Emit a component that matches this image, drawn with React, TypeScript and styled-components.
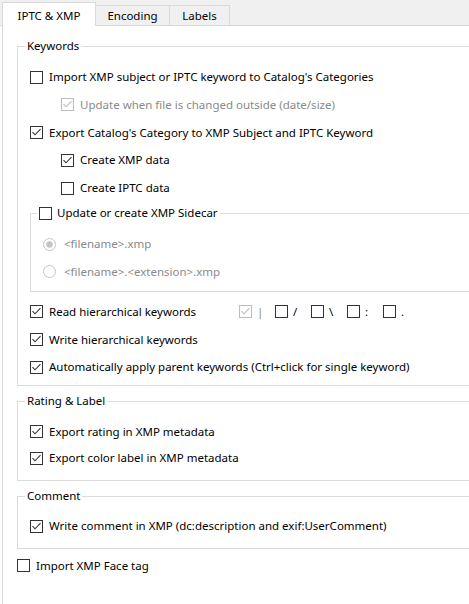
import React from 'react';
import styled, { createGlobalStyle } from 'styled-components';

const GlobalStyle = createGlobalStyle`
  html, body { margin: 0; padding: 0; background: #ffffff; overflow: hidden; }
  body {
    font-family: "Noto Sans", "Liberation Sans", Arial, sans-serif;
    font-size: 11.5px;
    color: #000000;
  }
`;

const Window = styled.div`
  width: 469px;
  height: 604px;
  overflow: hidden;
  background: #ffffff;
  display: flex;
  flex-direction: column;
`;

const TabStrip = styled.div`
  height: 26px;
  box-sizing: border-box;
  background: #f0f0f0;
  border-bottom: 1px solid #d9d9d9;
  display: flex;
  align-items: flex-end;
  padding-left: 2px;
  flex: none;
`;

const Tab = styled.div<{ $active?: boolean; $w: number }>`
  box-sizing: border-box;
  width: ${(p) => p.$w}px;
  height: ${(p) => (p.$active ? 24 : 20)}px;
  margin-bottom: ${(p) => (p.$active ? -1 : 0)}px;
  margin-left: ${(p) => (p.$active ? 0 : -1)}px;
  padding-top: ${(p) => (p.$active ? 6 : 3)}px;
  background: ${(p) => (p.$active ? '#ffffff' : '#f0f0f0')};
  border: 1px solid #d9d9d9;
  border-bottom: none;
  display: flex;
  justify-content: center;
  align-items: flex-start;
  line-height: 14px;
  white-space: nowrap;
  &:first-child { margin-left: 0; }
`;

const Panel = styled.div`
  flex: 1;
  margin-left: 2px;
  border-left: 1px solid #d9d9d9;
  padding-left: 14px;
  overflow: hidden;
`;

const Sheet = styled.div`
  width: 540px;
`;

const GroupBox = styled.section<{ $mt: number; $pt: number; $pb: number; $pl: number }>`
  position: relative;
  margin-top: ${(p) => p.$mt}px;
  padding: ${(p) => p.$pt}px 0 ${(p) => p.$pb}px ${(p) => p.$pl}px;
  border: 1px solid #dcdcdc;
  border-right: none;
`;

const GroupTitle = styled.div<{ $left: number }>`
  position: absolute;
  top: -8px;
  left: ${(p) => p.$left}px;
  padding: 0 2px;
  background: #ffffff;
  line-height: 14px;
  height: 14px;
  display: flex;
  align-items: center;
  gap: 5px;
  white-space: nowrap;
`;

const Row = styled.div<{ $indent?: number; $h?: number; $mt?: number; $gap?: number }>`
  display: flex;
  align-items: center;
  height: ${(p) => p.$h ?? 27.75}px;
  margin-top: ${(p) => p.$mt ?? 0}px;
  padding-left: ${(p) => p.$indent ?? 0}px;
  gap: ${(p) => p.$gap ?? 6}px;
  white-space: nowrap;
`;

const Label = styled.span<{ $disabled?: boolean }>`
  line-height: 14px;
  color: ${(p) => (p.$disabled ? '#8a8a8a' : '#000000')};
`;

const LeadCell = styled.span`
  display: flex;
  align-items: center;
  gap: 6px;
  width: 203px;
`;

const SepList = styled.span`
  display: flex;
  align-items: center;
`;

const SepItem = styled.span`
  display: flex;
  align-items: center;
  gap: 5px;
  width: 36px;
`;

const Glyph = styled.svg`
  display: block;
  flex: none;
`;

const CheckBox: React.FC<{ checked?: boolean; disabled?: boolean }> = ({ checked, disabled }) => {
  const c = disabled ? '#bcbcbc' : '#333333';
  return (
    <Glyph width="13" height="13" viewBox="0 0 13 13">
      <rect x="0.5" y="0.5" width="12" height="12" fill="#ffffff" stroke={c} />
      {checked && (
        <polyline points="2.5,6.2 5,8.8 10.5,3.2" fill="none" stroke={c} strokeWidth="1.1" />
      )}
    </Glyph>
  );
};

const Radio: React.FC<{ checked?: boolean }> = ({ checked }) => (
  <Glyph width="13" height="13" viewBox="0 0 13 13">
    <circle cx="6.5" cy="6.5" r="6" fill="#ffffff" stroke="#c4c4c4" />
    {checked && <circle cx="6.5" cy="6.5" r="3.2" fill="#c4c4c4" />}
  </Glyph>
);

const seps: { ch: string; checked?: boolean; disabled?: boolean }[] = [
  { ch: '|', checked: true, disabled: true },
  { ch: '/' },
  { ch: '\\' },
  { ch: ':' },
  { ch: '.' },
];

export default function App() {
  return (
    <>
      <GlobalStyle />
      <Window>
        <TabStrip>
          <Tab $active $w={94}>IPTC &amp; XMP</Tab>
          <Tab $w={75}>Encoding</Tab>
          <Tab $w={61}>Labels</Tab>
        </TabStrip>
        <Panel>
          <Sheet>
            <GroupBox $mt={20} $pt={16.25} $pb={4} $pl={12}>
              <GroupTitle $left={7}>Keywords</GroupTitle>
              <Row>
                <CheckBox />
                <Label>Import XMP subject or IPTC keyword to Catalog's Categories</Label>
              </Row>
              <Row $indent={31}>
                <CheckBox checked disabled />
                <Label $disabled>Update when file is changed outside (date/size)</Label>
              </Row>
              <Row>
                <CheckBox checked />
                <Label>Export Catalog's Category to XMP Subject and IPTC Keyword</Label>
              </Row>
              <Row $indent={31}>
                <CheckBox checked />
                <Label>Create XMP data</Label>
              </Row>
              <Row $indent={31}>
                <CheckBox />
                <Label>Create IPTC data</Label>
              </Row>
              <GroupBox $mt={11} $pt={16.25} $pb={5.25} $pl={12}>
                <GroupTitle $left={6}>
                  <CheckBox />
                  <Label>Update or create XMP Sidecar</Label>
                </GroupTitle>
                <Row $gap={8}>
                  <Radio checked />
                  <Label $disabled>&lt;filename&gt;.xmp</Label>
                </Row>
                <Row $gap={8}>
                  <Radio />
                  <Label $disabled>&lt;filename&gt;.&lt;extension&gt;.xmp</Label>
                </Row>
              </GroupBox>
              <Row $mt={6}>
                <LeadCell>
                  <CheckBox checked />
                  <Label>Read hierarchical keywords</Label>
                </LeadCell>
                <SepList>
                  {seps.map((s) => (
                    <SepItem key={s.ch}>
                      <CheckBox checked={s.checked} disabled={s.disabled} />
                      <Label $disabled={s.disabled}>{s.ch}</Label>
                    </SepItem>
                  ))}
                </SepList>
              </Row>
              <Row>
                <CheckBox checked />
                <Label>Write hierarchical keywords</Label>
              </Row>
              <Row>
                <CheckBox checked />
                <Label>Automatically apply parent keywords (Ctrl+click for single keyword)</Label>
              </Row>
            </GroupBox>

            <GroupBox $mt={15} $pt={16.25} $pb={8.75} $pl={12}>
              <GroupTitle $left={7}>Rating &amp; Label</GroupTitle>
              <Row $h={26.5}>
                <CheckBox checked />
                <Label>Export rating in XMP metadata</Label>
              </Row>
              <Row $h={26.5}>
                <CheckBox checked />
                <Label>Export color label in XMP metadata</Label>
              </Row>
            </GroupBox>

            <GroupBox $mt={15} $pt={15} $pb={7.5} $pl={12}>
              <GroupTitle $left={7}>Comment</GroupTitle>
              <Row>
                <CheckBox checked />
                <Label>Write comment in XMP (dc:description and exif:UserComment)</Label>
              </Row>
            </GroupBox>

            <Row $mt={3.5}>
              <CheckBox />
              <Label>Import XMP Face tag</Label>
            </Row>
          </Sheet>
        </Panel>
      </Window>
    </>
  );
}
